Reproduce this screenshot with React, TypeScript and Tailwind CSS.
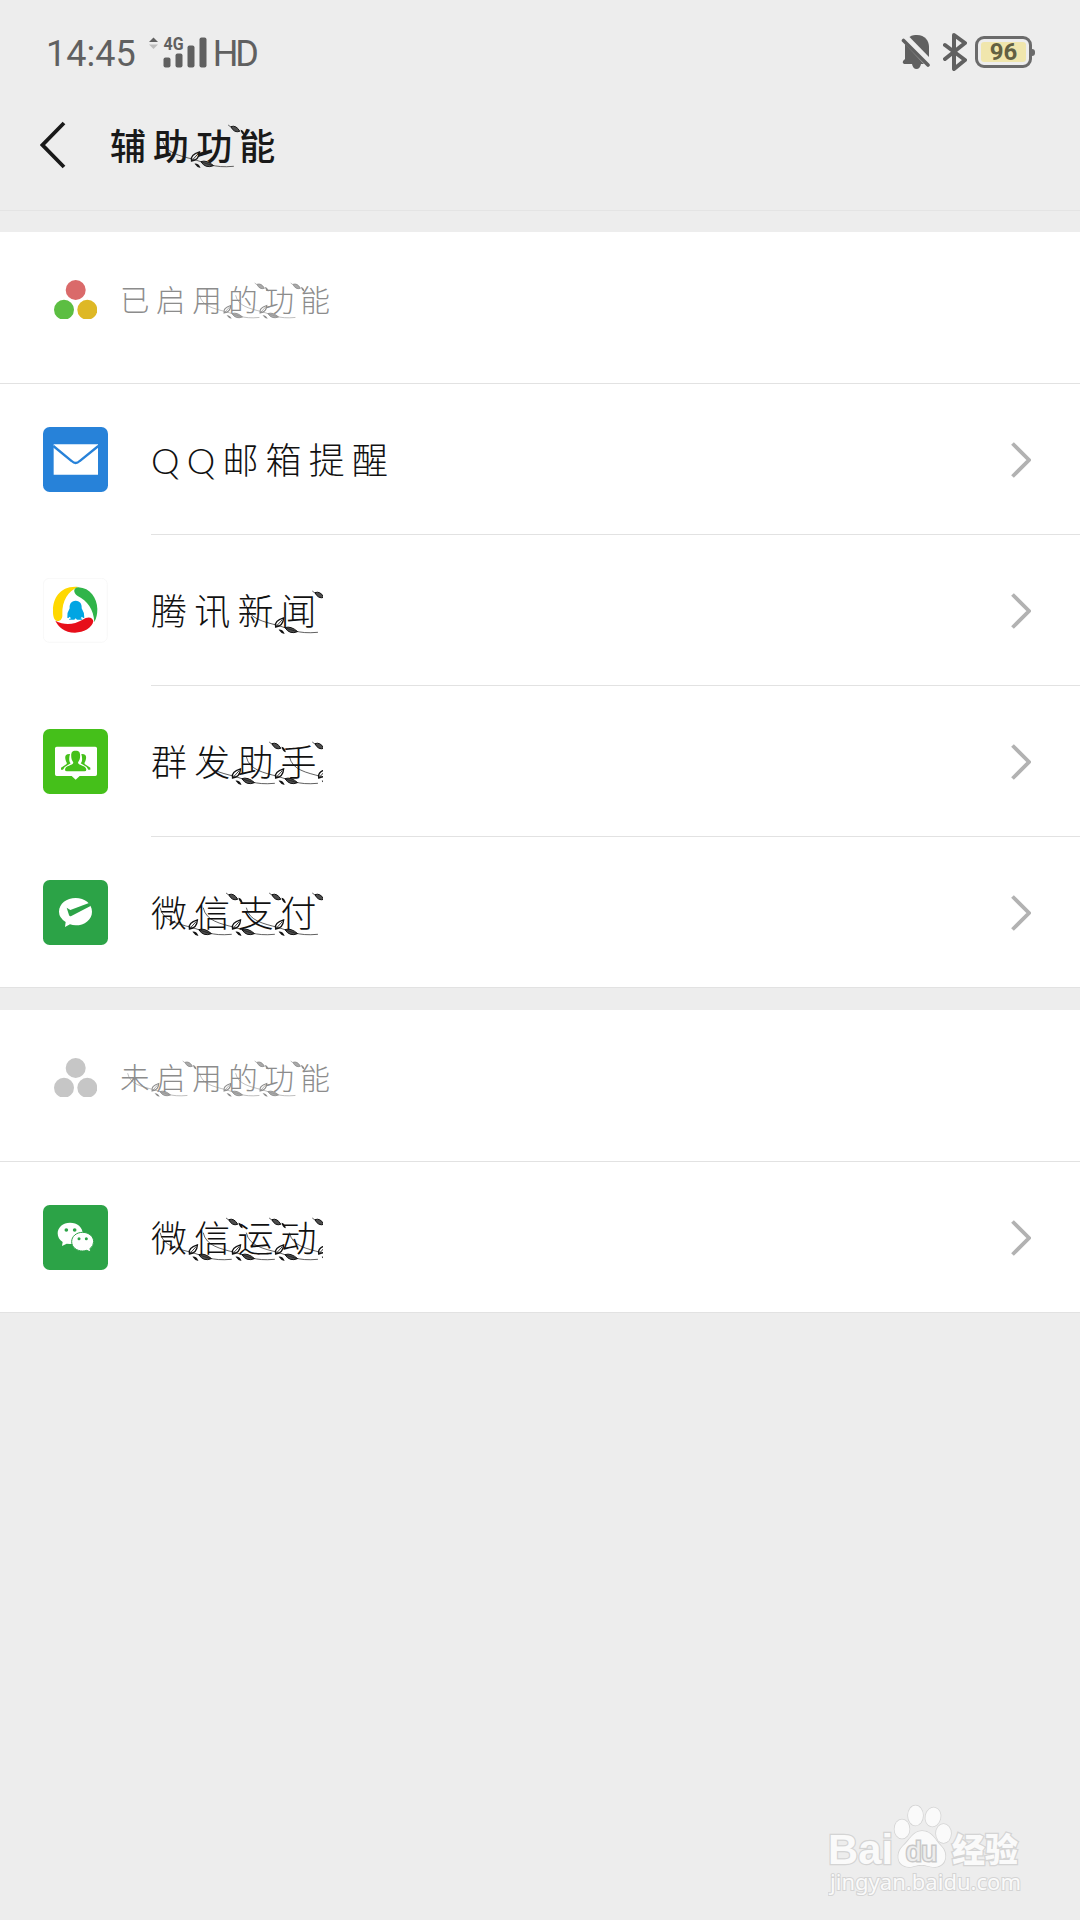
import React from 'react';

type IconName = 'mail' | 'news' | 'group' | 'pay' | 'wechat';

interface Feature {
  name: string;
  icon: IconName;
  // indexes of the characters that carry a vine
  vines: number[];
}

interface VineTextProps {
  text: string;
  vines: number[];
  pitch: number;
  scale: number;
  top: number;
  clip?: number;
  className: string;
}

const ENABLED: Feature[] = [
  { name: 'QQ邮箱提醒', icon: 'mail', vines: [] },
  { name: '腾讯新闻', icon: 'news', vines: [3] },
  { name: '群发助手', icon: 'group', vines: [2, 3, 4] },
  { name: '微信支付', icon: 'pay', vines: [1, 2, 3] },
];

const DISABLED: Feature[] = [
  { name: '微信运动', icon: 'wechat', vines: [1, 2, 3, 4] },
];

const Vine: React.FC = () => (
  <g fill="currentColor">
    <path d="M-102 26C-94 66 -50 74 -9 85S50 112 113 106" fill="none" stroke="currentColor" strokeWidth="2" />
    <path d="M-14 88C-17 76 -6 68 10 63C9 78 2 88 -14 90Z" fill="none" stroke="currentColor" strokeWidth="4" />
    <path d="M-13 89L6 68" fill="none" stroke="currentColor" strokeWidth="2.5" />
    <path d="M-5 98Q8 97 13 111Q2 109 -5 98Z" />
    <path d="M14 92Q32 86 52 104Q28 114 14 92Z" fillOpacity="0.75" stroke="currentColor" strokeWidth="3" />
    <path d="M96 -18L104 -12" stroke="currentColor" strokeWidth="2" />
    <path d="M104 -13Q120 -19 131 1Q114 7 104 -13Z" fillOpacity="0.75" stroke="currentColor" strokeWidth="3" />
    <path d="M133 -4Q144 -2 146 13Q136 10 133 -4Z" />
  </g>
);

const VineText: React.FC<VineTextProps> = ({ text, vines, pitch, scale, top, clip, className }) => (
  <span className={`relative block whitespace-nowrap ${className}`}>
    {text}
    <svg className="absolute left-0 top-0 h-[70px] overflow-hidden" width={clip ?? 260} height="70">
      {vines.map(i => (
        <g key={i} transform={`translate(${i * pitch} ${top}) scale(${scale})`}>
          <Vine />
        </g>
      ))}
    </svg>
  </span>
);

const RowIcon: React.FC<{ name: IconName }> = ({ name }) => {
  switch (name) {
    case 'mail':
      return (
        <svg className="h-[65px] w-[65px]" viewBox="0 0 195 195">
          <rect width="195" height="195" rx="20" fill="#2782d9" />
          <path d="M32 52H165V143H32Z" fill="#fff" />
          <path d="M31 57L86 102Q98 114 110 102L166 57" fill="none" stroke="#2782d9" strokeWidth="7" />
        </svg>
      );
    case 'news':
      return (
        <svg className="h-[65px] w-[65px]" viewBox="0 0 195 195">
          <rect x="1" y="1" width="192" height="192" rx="18" fill="#fff" stroke="#f5f5f5" strokeWidth="2" />
          <path d="M106 27C52 22 30 61 30 97C29 114 34 130 44 129C54 129 59 121 58 108C57 68 75 39 106 27Z" fill="#ffd800" />
          <path d="M106 28C142 30 162 60 163 93Q163 117 154 132C152 94 133 68 104 54C89 45 91 28 106 28Z" fill="#30b449" />
          <path d="M37 128C64 142 91 141 119 125C134 115 149 117 151 130C147 150 122 164 96 164C64 163 46 147 37 128Z" fill="#e70f1a" />
          <path d="M98 68C84 69 79 78 80 91Q71 105 73 119Q76 122 80 116L84 121Q76 124 79 125H94L98 121L102 125H118Q121 123 113 121L117 116Q121 122 124 119Q125 105 116 91C117 78 112 69 98 68Z" fill="#00a5e3" />
        </svg>
      );
    case 'group':
      return (
        <svg className="h-[65px] w-[65px]" viewBox="0 0 195 195">
          <rect width="195" height="195" rx="20" fill="#45c01a" />
          <path d="M41 53H157Q162 53 162 58V136Q162 141 157 141H110L98 152L86 141H41Q36 141 36 136V58Q36 53 41 53Z" fill="#fff" />
          <g fill="#45c01a">
            <path d="M98 65C84 65 84 75 85 86C86 94 90 96 91 101C89 110 67 108 66 122Q66 127 72 127H124Q130 127 130 122C129 108 107 110 105 101C106 96 110 94 111 86C112 75 112 65 98 65Z" />
            <path d="M81 75C66 74 65 83 68 94C71 104 73 101 70 106L54 116V122H60L65 114L83 103C77 96 78 86 81 75Z" />
            <path d="M115 75C130 74 131 83 128 94C125 104 123 101 126 106L142 116V122H136L131 114L113 103C119 96 118 86 115 75Z" />
          </g>
        </svg>
      );
    case 'pay':
      return (
        <svg className="h-[65px] w-[65px]" viewBox="0 0 195 195">
          <rect width="195" height="195" rx="20" fill="#2ca347" />
          <path d="M98 54C125 54 147 71 147 95S125 136 98 136Q89 136 81 133L66 141L68 126Q48 113 48 95C48 71 71 54 98 54Z" fill="#fff" />
          <path d="M71 83L82 90L138 69L144 77L85 108Q80 111 78 105Z" fill="#2ca347" />
        </svg>
      );
    default:
      return (
        <svg className="h-[65px] w-[65px]" viewBox="0 0 195 195">
          <rect width="195" height="195" rx="20" fill="#2ca347" />
          <path d="M81 53C103 53 119 67 119 85S103 117 81 117L71 116L57 123L59 111C49 105 44 96 44 85C44 67 60 53 81 53Z" fill="#fff" />
          <path d="M119 82C138 82 152 95 152 110Q152 122 141 131L143 141L131 136Q126 138 119 138C100 138 86 126 86 110S100 82 119 82Z" fill="#fff" stroke="#2ca347" strokeWidth="3" />
          <g fill="#2ca347">
            <circle cx="70" cy="75" r="5.5" />
            <circle cx="95" cy="75" r="5.5" />
            <circle cx="108" cy="101" r="4.5" />
            <circle cx="130" cy="101" r="4.5" />
          </g>
        </svg>
      );
  }
};

const Dots: React.FC<{ colors: string[] }> = ({ colors }) => (
  <svg className="ml-[54px] mt-12 h-[39px] w-[43px] shrink-0" viewBox="0 0 43 39">
    <circle cx="21.7" cy="10" r="10" fill={colors[0]} />
    <circle cx="10" cy="29.7" r="10" fill={colors[1]} />
    <circle cx="33.3" cy="29.7" r="10" fill={colors[2]} />
  </svg>
);

const SectionHeader: React.FC<{ title: string; vines: number[]; colors: string[] }> = ({ title, vines, colors }) => (
  <div className="flex h-[152px] items-start border-b border-[#e2e2e2]">
    <Dots colors={colors} />
    <VineText
      text={title}
      vines={vines}
      pitch={36}
      scale={0.278}
      top={13}
      className="ml-[23px] mt-[43px] font-['Noto_Sans_CJK_SC',sans-serif] text-[29.5px] font-light leading-[46px] tracking-[6.6px] text-[#8c8c8c]"
    />
  </div>
);

const FeatureRow: React.FC<{ feature: Feature; last: boolean }> = ({ feature, last }) => (
  <div className={`flex h-[151px] items-center pl-[43px] ${last ? 'border-b border-[#e2e2e2]' : ''}`}>
    <RowIcon name={feature.icon} />
    <div className={`ml-[43px] flex h-full flex-1 items-center justify-between pr-[49px] ${last ? '' : 'border-b border-[#e2e2e2]'}`}>
      <VineText
        text={feature.name}
        vines={feature.vines}
        pitch={43.1}
        scale={0.333}
        top={16}
        clip={172}
        className="pt-[2px] font-[Lato,'Noto_Sans_CJK_SC',sans-serif] text-[36px] font-light leading-[56px] tracking-[7.2px] text-[#111]"
      />
      <svg className="mt-px h-9 w-5" viewBox="0 0 20 36" fill="none" stroke="#b2b2b2" strokeWidth="3.8">
        <path d="M1.5 1.5L18 18L1.5 34.5" />
      </svg>
    </div>
  </div>
);

const StatusBar: React.FC = () => (
  <div className="flex h-[104px] items-center justify-between pl-[46px] pr-[48px] font-[Roboto,sans-serif] text-[#606060]">
    <div className="flex items-center pt-[3px]">
      <span className="text-[36px] leading-none">14:45</span>
      <svg className="mb-[3px] ml-[13px] h-[31px] w-[60px] overflow-visible" viewBox="0 0 60 31" fill="currentColor">
        <path d="M0 5L4.5 0.500L9 5Z" />
        <path d="M0 7.500L4.500 12L9 7.500Z" fill="#bdbdbd" />
        <text x="14.500" y="12.500" fontSize="17.500" fontWeight="700" textLength="20" lengthAdjust="spacingAndGlyphs">4G</text>
        <rect x="14.500" y="20.500" width="7" height="10" rx="2" />
        <rect x="26.500" y="16.500" width="7" height="14" rx="2" />
        <rect x="38.500" y="8.500" width="7" height="22" rx="2" />
        <rect x="50.500" y="0.500" width="7" height="30" rx="2" />
      </svg>
      <span className="ml-[4px] text-[36px] leading-none tracking-[-3px]">HD</span>
    </div>
    <div className="flex items-center">
      <svg className="h-[36px] w-[30px]" viewBox="0 0 30 36" fill="currentColor">
        <path d="M8.500 3C11 1 14 1 16 1C24 1 28 7 28 13V23Z" />
        <path d="M4 10L23 30H20Q19 35 15.500 35T11 30H3Q1 29 2 27L4 25Z" />
        <path d="M2.500 6.500L27 31" stroke="currentColor" strokeWidth="3.600" strokeLinecap="round" />
      </svg>
      <svg className="ml-3 h-[38px] w-[24px]" viewBox="0 0 24 38" fill="none" stroke="currentColor" strokeWidth="4" strokeLinejoin="round" strokeLinecap="round">
        <path d="M2 12L22 27L11 36V2L22 10L2 26" />
      </svg>
      <div className="relative ml-2 flex h-8 w-[57px] items-center justify-center rounded-[9px] border-[3px] border-[#6b6b6b] p-[3px]">
        <div className="flex h-full w-full items-center justify-center rounded-[3px] bg-[#f0e6ad] text-[24px] font-bold leading-none text-[#626043]">96</div>
        <i className="absolute -right-[6px] top-[10px] h-[7px] w-[3px] rounded-r-full bg-[#6b6b6b]" />
      </div>
    </div>
  </div>
);

const Watermark: React.FC = () => (
  <svg className="h-[96px] w-[200px]" viewBox="0 0 200 96" fill="#fafafa" stroke="#d4d4d4" strokeWidth="1.500" paintOrder="stroke">
    <ellipse cx="74" cy="25" rx="7.500" ry="9.500" />
    <ellipse cx="87.500" cy="11.500" rx="7.500" ry="10" />
    <ellipse cx="105" cy="13" rx="7.500" ry="9.500" transform="rotate(12 105 13)" />
    <ellipse cx="115.500" cy="29.500" rx="7.500" ry="9.500" />
    <path d="M94 27C104 27 107 36 113 42C120 49 119 62 107 63C100 63 99 61 94 61C87 61 86 63 81 63C68 62 68 49 75 42C82 36 85 27 94 27Z" />
    <text x="0" y="60" fontFamily="Liberation Sans" fontSize="42" fontWeight="700" textLength="65" lengthAdjust="spacingAndGlyphs" strokeWidth="2.500">Bai</text>
    <text x="78" y="57" fontFamily="Liberation Sans" fontSize="27" textLength="31" lengthAdjust="spacingAndGlyphs" strokeWidth="3" fill="#ededed" stroke="#c8c8c8">du</text>
    <text x="124" y="58" fontFamily="Noto Sans CJK SC" fontSize="33" fontWeight="900" textLength="66" strokeWidth="2.500">经验</text>
    <text x="2" y="86" fontFamily="Noto Sans" fontSize="22" textLength="191" strokeWidth="2">jingyan.baidu.com</text>
  </svg>
);

export default function App() {
  return (
    <div className="flex h-[1920px] w-[1080px] flex-col overflow-hidden bg-[#ededed]">
      <StatusBar />
      <header className="flex h-[107px] items-start border-b border-[#e4e4e4] pl-10">
        <svg className="mt-[17px] h-[48px] w-[26px]" viewBox="0 0 26 48" fill="none" stroke="#191919" strokeWidth="3.800">
          <path d="M24 2L2.500 24L24 46" />
        </svg>
        <VineText
          text="辅助功能"
          vines={[2]}
          pitch={43.1}
          scale={0.333}
          top={15}
          className="ml-[44px] mt-[12px] font-['Noto_Sans_CJK_SC',sans-serif] text-[36px] font-medium leading-[56px] tracking-[7.1px] text-[#191919]"
        />
      </header>

      <section className="mt-[21px] bg-white">
        <SectionHeader title="已启用的功能" vines={[3, 4]} colors={['#da6a6a', '#5cbe42', '#deb826']} />
        {ENABLED.map((feature, i) => (
          <FeatureRow key={feature.name} feature={feature} last={i === ENABLED.length - 1} />
        ))}
      </section>

      <section className="mt-[22px] bg-white">
        <SectionHeader title="未启用的功能" vines={[1, 3, 4]} colors={['#c6c6c6', '#c6c6c6', '#c6c6c6']} />
        {DISABLED.map((feature, i) => (
          <FeatureRow key={feature.name} feature={feature} last={i === DISABLED.length - 1} />
        ))}
      </section>

      <footer className="mt-auto flex justify-end pb-[20px] pr-[52px]">
        <Watermark />
      </footer>
    </div>
  );
}
